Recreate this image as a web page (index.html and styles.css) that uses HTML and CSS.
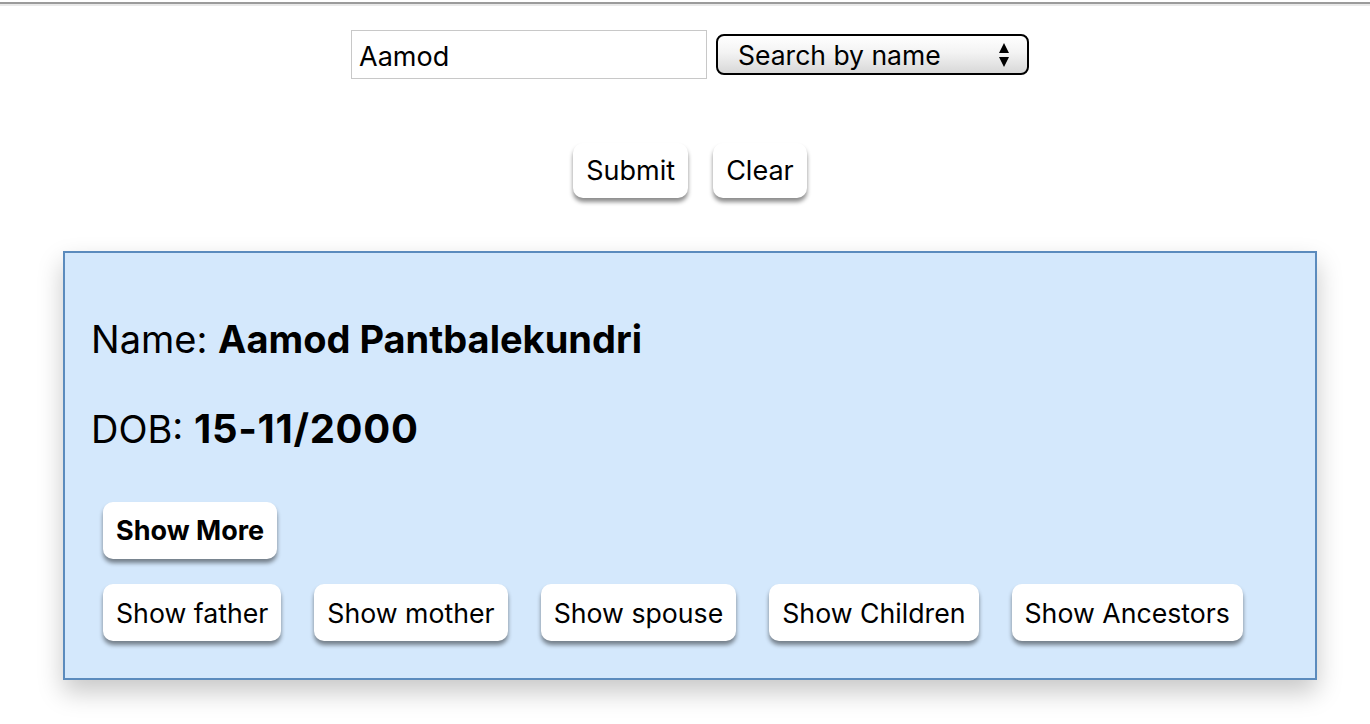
FILE: index.html
```html
<!DOCTYPE html>
<html>
<head>
<meta charset="utf-8">
<link rel="stylesheet" href="styles.css">
</head>
<body>
<div class="topline"></div>
<main class="page">
  <form class="search">
    <div class="search-row">
      <input class="name-input" type="text" value="Aamod">
      <div class="select-wrap">
        <select class="mode-select">
          <option>Search by name</option>
        </select>
        <svg class="select-arrows" width="10" height="26" viewBox="0 0 10 26"><path d="M5 1 L10 11 H0 Z M0 15 H10 L5 25 Z" fill="#000"/></svg>
      </div>
    </div>
    <div class="action-row">
      <button type="button" class="btn btn-submit">Submit</button>
      <button type="button" class="btn btn-clear">Clear</button>
    </div>
  </form>
  <section class="card">
    <p class="field field-name">Name: <b>Aamod Pantbalekundri</b></p>
    <p class="field field-dob">DOB: <b class="dob-value">15-11/2000</b></p>
    <div class="more-row">
      <button type="button" class="btn btn-bold">Show More</button>
    </div>
    <div class="rel-row">
      <button type="button" class="btn">Show father</button>
      <button type="button" class="btn">Show mother</button>
      <button type="button" class="btn">Show spouse</button>
      <button type="button" class="btn">Show Children</button>
      <button type="button" class="btn">Show Ancestors</button>
    </div>
  </section>
</main>
</body>
</html>
```
FILE: styles.css
```css
html, body {
  margin: 0;
  padding: 0;
  background: #fff;
}
body {
  font-family: Inter, "Liberation Sans", sans-serif;
  color: #000;
  min-height: 724px;
}
.topline {
  margin-top: 2px;
  height: 2px;
  background: #9b9b9b;
  border-bottom: 2px solid #e9e9e9;
}
.page {
  padding-left: 10px;
  padding-bottom: 44px;
}
.search {
  display: flex;
  flex-direction: column;
  align-items: center;
}
.search-row {
  display: flex;
  align-items: center;
  gap: 9px;
  margin-top: 24px;
}
.name-input {
  box-sizing: border-box;
  width: 356px;
  height: 49px;
  border: 1px solid #c8c8c8;
  padding: 4px 7px 0;
  font-family: Inter, sans-serif;
  font-size: 27px;
  color: #000;
  outline: none;
}
.select-wrap {
  position: relative;
}
.mode-select {
  appearance: none;
  -webkit-appearance: none;
  box-sizing: border-box;
  width: 313px;
  height: 41px;
  border: 2px solid #000;
  border-radius: 8px;
  background: linear-gradient(#ffffff, #f3f3f3 45%, #d8d8d8);
  font-family: Inter, sans-serif;
  font-size: 26.5px;
  color: #000;
  padding: 0 0 0 20px;
}
.select-arrows {
  position: absolute;
  right: 20px;
  top: 8px;
}
.action-row {
  display: flex;
  gap: 25px;
  margin-top: 64px;
}
.btn {
  box-sizing: border-box;
  height: 55px;
  padding: 0 13px;
  background: #fff;
  border: none;
  border-radius: 10px;
  box-shadow: 0 4px 4px rgba(0, 0, 0, 0.45);
  font-family: Inter, sans-serif;
  font-size: 27px;
  color: #000;
}
.card {
  box-sizing: border-box;
  width: 1254px;
  margin: 53px 0 0 53px;
  padding: 63px 26px 37px;
  background: #d4e8fc;
  border: 2px solid #5b8bbd;
  box-shadow: 0 12px 24px rgba(0, 0, 0, 0.22);
}
.field {
  margin: 0;
  font-size: 38px;
  line-height: 46px;
}
.field-name {
  margin-bottom: 44px;
}
.field b {
  font-weight: 700;
}
.dob-value {
  font-size: 40px;
  letter-spacing: 0.7px;
}
.more-row {
  margin: 50px 0 0 12px;
}
.rel-row {
  display: flex;
  gap: 33px;
  margin: 25px 0 0 12px;
}
.more-row .btn,
.rel-row .btn {
  height: 57px;
}
.rel-row .btn {
  font-size: 26.7px;
}
.btn-bold {
  font-weight: 700;
}
```
